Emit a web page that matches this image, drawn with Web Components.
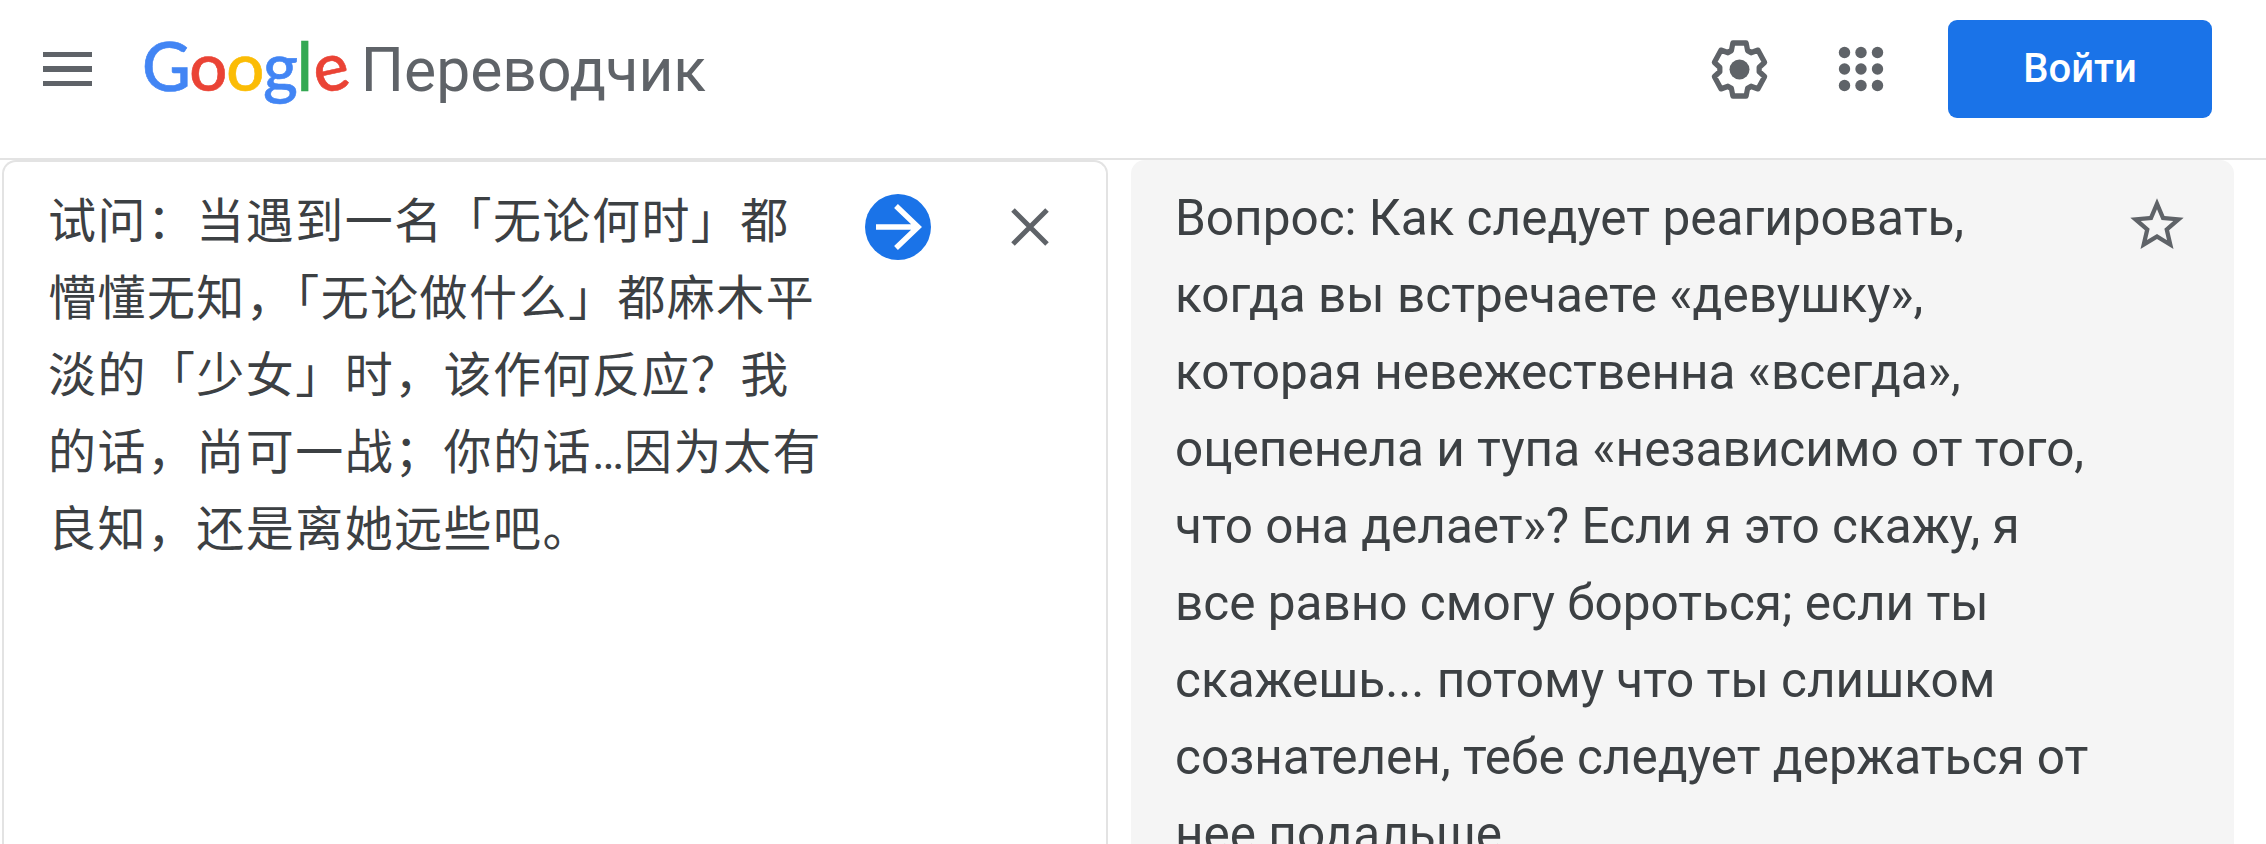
<!DOCTYPE html>
<html lang="ru">
<head>
<meta charset="utf-8">
<title>Google Переводчик</title>
<style>
  html, body { margin: 0; height: 100%; overflow: hidden; background: #fff; }
</style>
</head>
<body>
<translate-app></translate-app>
<script>
class GoogleLogo extends HTMLElement {
  constructor() {
    super();
    this.attachShadow({ mode: 'open' }).innerHTML = /*html*/`
      <style>
        :host { display: flex; align-items: baseline; margin-bottom: 5px; }
        .google { font: 500 67px/1 Lato, "Open Sans", sans-serif; letter-spacing: -1.2px; margin-right: 15px; -webkit-text-stroke: .6px; }
        .name { font: 400 60.6px/1 Roboto, sans-serif; color: #5f6368; }
        .b { color: #4285f4; } .r { color: #ea4335; } .y { color: #fbbc05; } .g { color: #34a853; }
        .e { display: inline-block; transform: rotate(-12deg); }
      </style>
      <span class="google"><span class="b">G</span><span class="r">o</span><span class="y">o</span><span class="b">g</span><span class="g">l</span><span class="r e">e</span></span>
      <span class="name"><slot></slot></span>
    `;
  }
}

class AppHeader extends HTMLElement {
  constructor() {
    super();
    this.attachShadow({ mode: 'open' }).innerHTML = /*html*/`
      <style>
        :host { display: flex; align-items: center; height: 138px; padding: 0 54px 20px 43px; border-bottom: 2px solid #e3e3e3; }
        .menu { display: flex; flex-direction: column; gap: 9px; width: 49px; margin-right: 50px; }
        .menu i { display: block; height: 5.5px; background: #5f6368; }
        .spacer { flex: 1; }
        svg { display: block; }
        .gear { margin-right: 65px; }
        .apps { margin-right: 64px; fill: #5f6368; }
        .signin {
          width: 264px; height: 98px; border-radius: 9px; background: #1a73e8; color: #fff;
          font: 500 40px/98px Roboto, sans-serif; text-align: center;
        }
      </style>
      <div class="menu"><i></i><i></i><i></i></div>
      <google-logo>Переводчик</google-logo>
      <div class="spacer"></div>
      <svg class="gear" width="67" height="67" viewBox="-33.5 -33.5 67 67">
        <path transform="scale(.95 1)" fill="none" stroke="#5f6368" stroke-width="5.5" stroke-linejoin="round"
          d="M-8.5-19-7-26.5H7L8.5-19 12.2-16.86 19.45-19.31 26.45-7.19 20.7-2.14V2.14L26.45 7.19 19.45 19.31 12.2 16.86 8.5 19 7 26.5H-7L-8.5 19-12.2 16.86-19.45 19.31-26.45 7.19-20.7 2.14V-2.14L-26.45-7.19-19.45-19.31-12.2-16.86Z"/>
        <circle r="10" fill="#5f6368"/>
      </svg>
      <svg class="apps" width="46" height="46" viewBox="0 0 46 46">
        <circle cx="6.5" cy="6.5" r="5.7"/><circle cx="23" cy="6.5" r="5.7"/><circle cx="39.5" cy="6.5" r="5.7"/>
        <circle cx="6.5" cy="23" r="5.7"/><circle cx="23" cy="23" r="5.7"/><circle cx="39.5" cy="23" r="5.7"/>
        <circle cx="6.5" cy="39.5" r="5.7"/><circle cx="23" cy="39.5" r="5.7"/><circle cx="39.5" cy="39.5" r="5.7"/>
      </svg>
      <div class="signin">Войти</div>
    `;
  }
}

class SourcePanel extends HTMLElement {
  constructor() {
    super();
    this.attachShadow({ mode: 'open' }).innerHTML = /*html*/`
      <style>
        :host {
          display: flex; box-sizing: border-box; width: 1106px; margin-left: 2px; min-height: 900px;
          border: 2px solid #e3e3e3; border-bottom: 0; border-radius: 14px 14px 0 0;
          padding: 17px 0 0 44px;
        }
        .text {
          width: 780px; flex: none; white-space: nowrap;
          font: 400 48px/77px "Noto Sans CJK SC", sans-serif; color: #3c4043;
          letter-spacing: 1.45px;
        }
        .go { flex: none; width: 66px; height: 66px; margin: 15px 0 0 37px; }
        .clear { flex: none; width: 38px; height: 38px; margin: 29px 0 0 80px; }
        svg { display: block; }
      </style>
      <div class="text"><slot></slot></div>
      <svg class="go" viewBox="0 0 66 66"><circle cx="33" cy="33" r="33" fill="#1a73e8"/><path d="M11 33h42M31 12l22 21-22 21" fill="none" stroke="#fff" stroke-width="5.5"/></svg>
      <svg class="clear" viewBox="0 0 38 38"><path d="M2 2l34 34M36 2L2 36" fill="none" stroke="#5f6368" stroke-width="5"/></svg>
    `;
  }
}

class TargetPanel extends HTMLElement {
  constructor() {
    super();
    this.attachShadow({ mode: 'open' }).innerHTML = /*html*/`
      <style>
        :host {
          display: flex; box-sizing: border-box; width: 1103px; margin-left: 23px; min-height: 900px;
          background: #f5f5f5; border-radius: 14px 14px 0 0;
          padding: 20px 0 0 44px;
        }
        .text { width: 950px; flex: none; white-space: nowrap; font: 400 49.5px/77px Roboto, sans-serif; color: #3c4043; }
        svg { display: block; flex: none; width: 64px; height: 64px; margin: 13px 0 0 0; fill: #5f6368; }
      </style>
      <div class="text"><slot></slot></div>
      <svg viewBox="0 0 24 24"><path d="M22 9.24l-7.19-.62L12 2 9.19 8.63 2 9.24l5.46 4.73L5.82 21 12 17.27 18.18 21l-1.63-7.03L22 9.24zM12 15.4l-3.76 2.27 1-4.28-3.32-2.88 4.38-.38L12 6.1l1.71 4.04 4.38.38-3.32 2.88 1 4.28L12 15.4z"/></svg>
    `;
  }
}

class TranslateApp extends HTMLElement {
  constructor() {
    super();
    this.attachShadow({ mode: 'open' }).innerHTML = /*html*/`
      <style>
        :host { display: block; height: 844px; overflow: hidden; }
        main { display: flex; align-items: flex-start; }
        .dots { font-family: Roboto, sans-serif; letter-spacing: 0; line-height: 0; }
      </style>
      <app-header></app-header>
      <main>
        <source-panel>试问：当遇到一名「无论何时」都<br>懵懂无知，「无论做什么」都麻木平<br>淡的「少女」时，该作何反应？我<br>的话，尚可一战；你的话<span class="dots">…</span>因为太有<br>良知，还是离她远些吧。</source-panel>
        <target-panel>Вопрос: Как следует реагировать,<br>когда вы встречаете «девушку»,<br>которая невежественна «всегда»,<br>оцепенела и тупа «независимо от того,<br>что она делает»? Если я это скажу, я<br>все равно смогу бороться; если ты<br>скажешь... потому что ты слишком<br>сознателен, тебе следует держаться от<br>нее подальше.</target-panel>
      </main>
    `;
  }
}

customElements.define('google-logo', GoogleLogo);
customElements.define('app-header', AppHeader);
customElements.define('source-panel', SourcePanel);
customElements.define('target-panel', TargetPanel);
customElements.define('translate-app', TranslateApp);
</script>
</body>
</html>
